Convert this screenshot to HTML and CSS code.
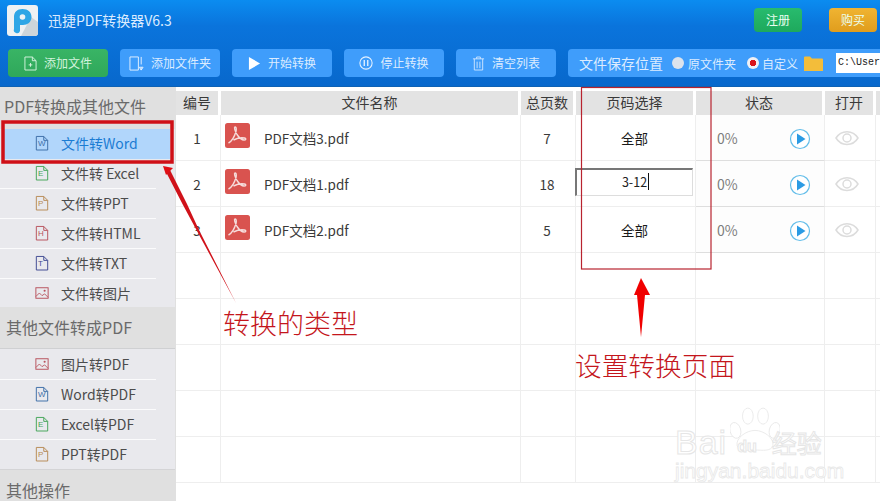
FILE: index.html
```html
<!DOCTYPE html>
<html lang="zh-CN">
<head>
<meta charset="utf-8">
<title>迅捷PDF转换器</title>
<link rel="stylesheet" href="styles.css">
</head>
<body>
<svg class="defs" width="0" height="0" aria-hidden="true">
  <defs>
    <symbol id="doc" viewBox="0 0 16 18"><path d="M1.5 1.5h8.500l4.500 4.500v11h-13z M10 1.500v4.500h4.500" fill="none" stroke="currentColor" stroke-width="1.100"/></symbol>
    <symbol id="pic" viewBox="0 0 16 16"><rect x="1" y="2" width="14" height="12" fill="none" stroke="currentColor" stroke-width="1.100"/><path d="M1 12l4-4 3 3 3-2 4 4" fill="none" stroke="currentColor"/><circle cx="11" cy="5.500" r="1.200" fill="currentColor"/></symbol>
    <symbol id="pdf" viewBox="0 0 25 25"><rect width="25" height="25" rx="2.500" fill="#d9534f"/><path d="M3.500 20c3-1.500 6-6.500 7.500-11.500.6-2.500.2-5-1-4.500-1.200.6 0 4 2 7.500 2 3 5 5.500 7 5.500 2 0 2.500-1.500.5-2-3-.7-8 .5-11 2" fill="none" stroke="#f6dcdb" stroke-width="1.400"/></symbol>
    <symbol id="play" viewBox="0 0 22 22"><circle cx="11" cy="11" r="9.500" fill="#fff" stroke="#62bde9" stroke-width="1.200"/><path d="M8 5.500l8.500 5.500-8.500 5.500z" fill="#2b9be4"/></symbol>
    <symbol id="eye" viewBox="0 0 24 16"><path d="M1 8c5-8.500 17-8.500 22 0-5 8.500-17 8.500-22 0z" fill="none" stroke="#dcdcdc" stroke-width="1.500"/><circle cx="12" cy="8" r="4" fill="none" stroke="#dcdcdc" stroke-width="1.500"/></symbol>
  </defs>
</svg>
<div class="app">
  <header class="top">
    <div class="titlebar">
      <div class="logo"><svg viewBox="0 0 31 31" width="31" height="31"><path d="M14 31L24 12l7 5v11a3 3 0 0 1-3 3z" fill="#cdd5da"/><path d="M7 24V12c0-5 3-8 8.500-8s9 3 9 8-4 8-8.500 8h-3v6a3 3 0 0 1-6-2z" fill="#2ea6e6"/><circle cx="15.500" cy="12" r="2.800" fill="#eef3f6"/></svg></div>
      <span class="apptitle">迅捷PDF转换器V6.3</span>
      <button class="pill pill-green">注册</button>
      <button class="pill pill-gold">购买</button>
    </div>
    <div class="toolbar">
      <button class="tool tool-green"><svg class="ticon" viewBox="0 0 14 16" width="13" height="15"><path d="M1 1h8l4 4v10H1z M9 1v4h4 M5 9.500h4 M7 7.500v4" fill="none" stroke="#d9f5e2"/></svg>添加文件</button>
      <button class="tool"><svg class="ticon" viewBox="0 0 16 16" width="15" height="15"><path d="M10 1H1v14h9 M13 1v8 M13 15v-3 M11 12h4l-2 3z" fill="none" stroke="#e6f2ff"/><path d="M10 1v14" stroke="#e6f2ff"/></svg>添加文件夹</button>
      <button class="tool"><svg class="ticon" viewBox="0 0 14 16" width="13" height="15"><path d="M1 1l12 7-12 7z" fill="#fff"/></svg>开始转换</button>
      <button class="tool"><svg class="ticon" viewBox="0 0 16 16" width="14" height="14"><circle cx="8" cy="8" r="7" fill="none" stroke="#e6f2ff" stroke-width="1.200"/><path d="M6 4.500v7 M10 4.500v7" stroke="#e6f2ff" stroke-width="1.500"/></svg>停止转换</button>
      <button class="tool"><svg class="ticon" viewBox="0 0 14 16" width="13" height="15"><path d="M1 3h12 M5 3V1h4v2 M2.500 3v12h9V3 M5.500 6v7 M8.500 6v7" fill="none" stroke="#cfe6ff"/></svg>清空列表</button>
      <div class="savebox">
        <span class="savelabel">文件保存位置</span>
        <span class="radio"></span><span class="radiotext">原文件夹</span>
        <span class="radio radio-on"></span><span class="radiotext">自定义</span>
        <svg class="folder" viewBox="0 0 19 15" width="19" height="15"><path d="M0 1.500a1 1 0 0 1 1-1h5l2 2h10a1 1 0 0 1 1 1V15H0z" fill="#f3bd3a"/></svg>
        <span class="pathbox">C:\User</span>
      </div>
    </div>
  </header>

  <div class="main">
    <nav class="side">
      <div class="sec sec-first">PDF转换成其他文件</div>
      <div class="item item-on"><svg class="ficon c-word"><use href="#doc"/></svg><i class="letter c-word">W</i><span>文件转Word</span></div>
      <div class="item"><svg class="ficon c-excel"><use href="#doc"/></svg><i class="letter c-excel">E</i><span>文件转 Excel</span></div>
      <div class="item"><svg class="ficon c-ppt"><use href="#doc"/></svg><i class="letter c-ppt">P</i><span>文件转PPT</span></div>
      <div class="item"><svg class="ficon c-html"><use href="#doc"/></svg><i class="letter c-html">H</i><span>文件转HTML</span></div>
      <div class="item"><svg class="ficon c-txt"><use href="#doc"/></svg><i class="letter c-txt">T</i><span>文件转TXT</span></div>
      <div class="item item-last"><svg class="ficon c-html"><use href="#pic"/></svg><span>文件转图片</span></div>
      <div class="sec sec-second">其他文件转成PDF</div>
      <div class="item item-gap"><svg class="ficon c-html"><use href="#pic"/></svg><span>图片转PDF</span></div>
      <div class="item"><svg class="ficon c-word"><use href="#doc"/></svg><i class="letter c-word">W</i><span>Word转PDF</span></div>
      <div class="item"><svg class="ficon c-excel"><use href="#doc"/></svg><i class="letter c-excel">E</i><span>Excel转PDF</span></div>
      <div class="item item-end"><svg class="ficon c-ppt"><use href="#doc"/></svg><i class="letter c-ppt">P</i><span>PPT转PDF</span></div>
      <div class="sec sec-third">其他操作</div>
    </nav>

    <section class="grid">
      <div class="hd">编号</div><div class="hd">文件名称</div><div class="hd">总页数</div><div class="hd">页码选择</div><div class="hd">状态</div><div class="hd">打开</div><div class="hd hd-blank"></div>

      <div class="c c-mid">1</div>
      <div class="c c-name"><svg class="pdficon"><use href="#pdf"/></svg><span>PDF文档3.pdf</span></div>
      <div class="c c-mid">7</div>
      <div class="c c-mid c-black">全部</div>
      <div class="c c-status"><span>0%</span><svg class="playicon"><use href="#play"/></svg></div>
      <div class="c c-mid"><svg class="eyeicon"><use href="#eye"/></svg></div>
      <div class="c c-blank"></div>

      <div class="c c-mid">2</div>
      <div class="c c-name"><svg class="pdficon"><use href="#pdf"/></svg><span>PDF文档1.pdf</span></div>
      <div class="c c-mid">18</div>
      <div class="c c-input"><div class="pageinput"><span>3-12</span><b class="caret"></b></div></div>
      <div class="c c-status"><span>0%</span><svg class="playicon"><use href="#play"/></svg></div>
      <div class="c c-mid"><svg class="eyeicon"><use href="#eye"/></svg></div>
      <div class="c c-blank"></div>

      <div class="c c-mid">3</div>
      <div class="c c-name"><svg class="pdficon"><use href="#pdf"/></svg><span>PDF文档2.pdf</span></div>
      <div class="c c-mid">5</div>
      <div class="c c-mid c-black">全部</div>
      <div class="c c-status"><span>0%</span><svg class="playicon"><use href="#play"/></svg></div>
      <div class="c c-mid"><svg class="eyeicon"><use href="#eye"/></svg></div>
      <div class="c c-blank"></div>

      <div class="c"></div><div class="c"></div><div class="c"></div><div class="c"></div><div class="c"></div><div class="c"></div><div class="c c-blank"></div>
      <div class="c"></div><div class="c"></div><div class="c"></div><div class="c"></div><div class="c"></div><div class="c"></div><div class="c c-blank"></div>
      <div class="c"></div><div class="c"></div><div class="c"></div><div class="c"></div><div class="c"></div><div class="c"></div><div class="c c-blank"></div>
      <div class="c"></div><div class="c"></div><div class="c"></div><div class="c"></div><div class="c"></div><div class="c"></div><div class="c c-blank"></div>
      <div class="c"></div><div class="c"></div><div class="c"></div><div class="c"></div><div class="c"></div><div class="c"></div><div class="c c-blank"></div>
    </section>
  </div>

  <svg class="marks" viewBox="0 0 880 501" width="880" height="501" aria-hidden="true">
    <rect x="3" y="122" width="169" height="40" fill="none" stroke="#cf1017" stroke-width="3.500"/>
    <rect x="581.500" y="87.500" width="129.500" height="181.500" fill="none" stroke="#b8232f" stroke-width="1.200"/>
    <path d="M170 170L166 172L183 205L197 231L236 303L199 230L187 204z" fill="#d0121a"/>
    <path d="M163 166L173 168L166 175z" fill="#e00f16"/>
    <path d="M637 295H645L641 337z" fill="#f00000"/>
    <path d="M641 278L650 295H634z" fill="#f00000"/>
  </svg>
  <div class="note note-type">转换的类型</div>
  <div class="note note-page">设置转换页面</div>

  <div class="baidu">
    <svg class="paw" viewBox="0 0 56 50" width="50" height="45" aria-hidden="true">
      <g fill="#fff" stroke="#e8e8e8" stroke-width="1">
        <ellipse cx="6" cy="26" rx="6" ry="9" transform="rotate(-15 6 26)"/><ellipse cx="20" cy="10" rx="6" ry="9"/><ellipse cx="37" cy="10" rx="6" ry="9"/><ellipse cx="50" cy="26" rx="6" ry="9" transform="rotate(15 50 26)"/>
        <path d="M28 26c10 0 22 9 20 17-2 7-12 5-20 5s-18 2-20-5c-2-8 10-17 20-17z"/>
      </g>
    </svg>
    <div class="bd-line"><span class="bd-bai">Bai</span><span class="bd-du">du</span><span class="bd-jy">经验</span></div>
    <div class="bd-url">jingyan.baidu.com</div>
  </div>
</div>
</body>
</html>
```
FILE: styles.css
```css
* { box-sizing: border-box; }
html, body { margin: 0; padding: 0; overflow: hidden; }
body { font-family: "Noto Sans CJK SC", "Noto Sans", sans-serif; background: #fff; }
.defs { position: absolute; }
.app { position: relative; width: 880px; height: 501px; overflow: hidden; }

.top { height: 87px; background: linear-gradient(#0b8cf0, #0a74dc 30%, #0868cc); border-bottom: 1px solid #0e62b4; }
.titlebar { height: 49px; display: flex; align-items: flex-start; position: relative; padding: 5px 3px 0 7px; }
.logo { width: 31px; height: 31px; background: #eef1f3; border-radius: 3px; overflow: hidden; }
.logo svg { display: block; }
.apptitle { margin: 5px auto 0 10px; color: #dcecff; font-size: 14px; line-height: 20px; }
.pill { width: 48px; height: 24px; margin-top: 3px; border: 0; border-radius: 4px; color: #eafff1; font: 12px/24px "Noto Sans CJK SC", sans-serif; padding: 0; }
.pill-green { background: linear-gradient(#28bb6e, #1ea95c); margin-right: 27px; }
.pill-gold { background: linear-gradient(#f0b432, #e09d1d); }

.toolbar { display: flex; gap: 12px; padding: 0 0 0 8px; }
.tool { width: 100px; height: 28px; border: 0; border-radius: 4px; background: #3f9dfb; color: #dcecff; font: 12px/28px "Noto Sans CJK SC", sans-serif; padding: 0; display: flex; align-items: center; justify-content: center; gap: 7px; }
.tool-green { background: linear-gradient(#39b465, #2fa85a); color: #d3f3dd; }
.ticon { flex: none; }
.savebox { flex: 1; height: 28px; background: #3f9dfb; border-radius: 4px 0 0 4px; display: flex; align-items: center; padding-left: 11px; color: #dcecff; font-size: 12px; }
.savelabel { font-size: 14px; margin-right: 9px; }
.radio { width: 12px; height: 12px; border-radius: 50%; background: #dbe3ec; margin-right: 4px; flex: none; }
.radio-on { background: radial-gradient(circle, #d8141c 0 3px, #f0f0f4 3.500px); margin-left: 1px; margin-right: 3px; }
.radiotext { margin-right: 10px; }
.folder { flex: none; margin: 0 13px 0 -4px; }
.pathbox { width: 44px; height: 20px; background: #fff; color: #222; font: 10px/20px "Liberation Mono", monospace; padding-left: 2px; white-space: nowrap; overflow: hidden; }

.main { display: flex; height: 414px; }
.side { width: 176px; flex: none; background: #e9e9ed; border-right: 1px solid #e0e0e0; }
.sec { background: #e0e0e0; color: #6a6a6a; font-size: 16px; }
.sec-first { height: 42px; padding: 7px 0 0 4px; line-height: 24px; }
.sec-second { height: 42px; padding: 8px 0 0 6px; line-height: 24px; border-bottom: 1px solid #cfd0d2; }
.sec-third { height: 32px; padding: 9px 0 0 6px; line-height: 22px; border-top: 1px solid #d4d4d6; }
.item { height: 30px; width: 156px; display: flex; align-items: center; position: relative; padding: 0 0 2px 35px; color: #4c4c4c; font-size: 14px; border-bottom: 1px solid #fbfbfc; }
.item span { margin-left: 12px; line-height: 20px; }
.item-on { width: 166px; margin-left: 4px; padding-left: 31px; background: #b1d6fb; color: #1b7cd3; border-bottom: 0; }
.item-last { height: 28px; border-bottom: 0; padding-bottom: 0; }
.item-gap { margin-top: 1px; }
.item-end { border-bottom: 0; height: 29px; }
.ficon { width: 14px; height: 16px; flex: none; }
.letter { position: absolute; left: 38px; top: 9px; font: normal 8px/12px "Liberation Sans", sans-serif; }
.item-on .letter { left: 34px; }
.c-word { color: #3d6ea8; }
.c-excel { color: #45a658; }
.c-ppt { color: #b78a55; }
.c-html { color: #b8525d; }
.c-txt { color: #3f4a92; }

.grid { flex: 1; display: grid; grid-template-columns: 45px 300px 55px 120px 129px 51px 4px; grid-template-rows: 28px repeat(8, 46px); background: #fff; }
.hd { height: 24px; margin: 4px 3px 0 0; background: #e3e3e3; color: #3a3a3a; font-size: 14px; line-height: 22px; text-align: center; }
.hd-blank { margin-right: 0; }
.c { border-right: 1px solid #eeeeee; border-bottom: 1px solid #eeeeee; color: #3a3a3a; font-size: 13px; }
.c-blank { border-right: 0; }
.c-mid { display: flex; align-items: center; justify-content: center; font-size: 13.500px; padding-right: 2px; }
.c-black { color: #1a1a1a; }
.c-name { display: flex; align-items: center; padding-left: 4px; font-size: 13.500px; }
.c-name span { margin-left: 14px; }
.pdficon { width: 25px; height: 25px; flex: none; margin-top: -5px; }
.c-status { display: flex; align-items: center; padding-left: 21px; color: #7d7d7d; font-size: 14px; background: #fdfdfd; border-bottom: 1px solid #dedede; }
.playicon { width: 22px; height: 22px; margin-left: 51px; margin-top: 2px; }
.eyeicon { width: 24px; height: 16px; margin: 0 4px 0 0; }
.c-input { padding-top: 7px; }
.pageinput { width: 118px; height: 28px; margin-left: -1px; border-top: 2px solid #777; border-left: 2px solid #777; border-right: 1px solid #ddd; border-bottom: 1px solid #ddd; color: #222; font-size: 12.500px; line-height: 24px; display: flex; justify-content: center; padding-left: 2px; }
.caret { width: 1px; height: 17px; margin: 3px 0 0 1px; background: #111; }

.marks { position: absolute; left: 0; top: 0; pointer-events: none; }
.note { position: absolute; color: #c4161c; font-weight: 300; white-space: nowrap; }
.note-type { left: 223px; top: 304px; font-size: 27px; line-height: 38px; }
.note-page { left: 575px; top: 346px; font-size: 26.700px; line-height: 38px; }

.baidu { position: absolute; left: 675px; top: 405px; width: 156px; height: 78px; }
.paw { position: absolute; left: 55px; top: 2px; }
.bd-line { position: absolute; left: 0; top: 21px; height: 32px; display: flex; align-items: center; white-space: nowrap; -webkit-text-stroke: 1px #e6e6e6; color: #fff; font-family: "Liberation Sans", "Noto Sans CJK SC", sans-serif; }
.bd-bai { font-size: 34px; line-height: 32px; letter-spacing: 1px; }
.bd-du { font-size: 16px; margin: 10px 0 0 10px; line-height: 20px; font-weight: bold; }
.bd-jy { font-size: 25px; margin-left: 15px; font-family: "Noto Sans CJK SC", sans-serif; line-height: 32px; }
.bd-url { position: absolute; left: 0; top: 55px; font: 21px/22px "Liberation Sans", sans-serif; color: #fff; -webkit-text-stroke: .8px #e8e8e8; white-space: nowrap; }
```
